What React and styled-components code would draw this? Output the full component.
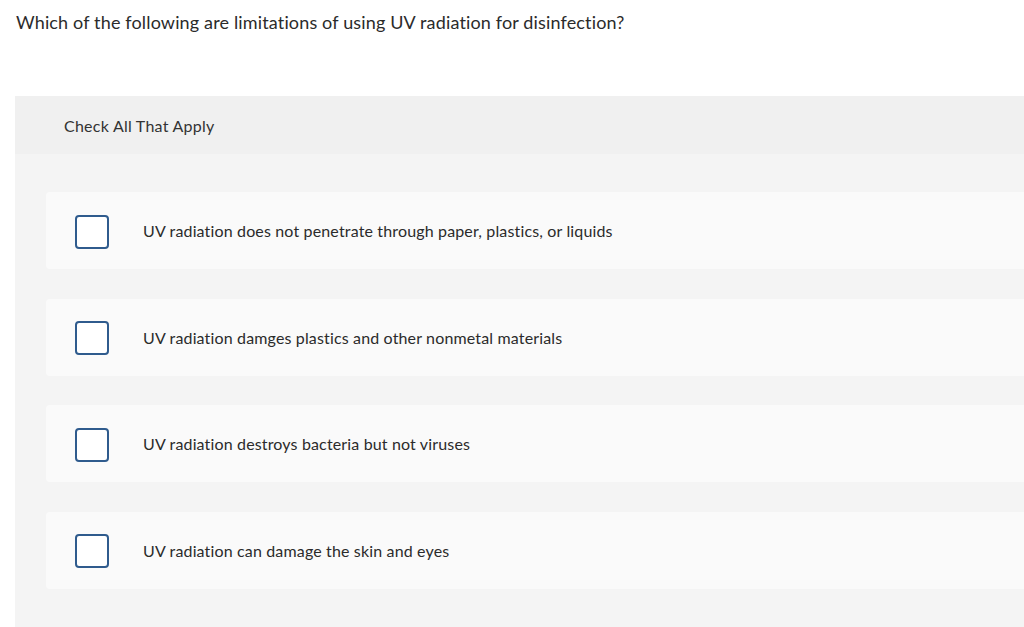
import React, { useState } from 'react';
import styled, { createGlobalStyle } from 'styled-components';

const GlobalStyle = createGlobalStyle`
	html, body {
		margin: 0;
		padding: 0;
		background: #fff;
		overflow: hidden;
	}
	body {
		font-family: Lato, "Open Sans", "Liberation Sans", sans-serif;
		color: #333;
		letter-spacing: 0.15px;
	}
`;

const options = [
	'UV radiation does not penetrate through paper, plastics, or liquids',
	'UV radiation damges plastics and other nonmetal materials',
	'UV radiation destroys bacteria but not viruses',
	'UV radiation can damage the skin and eyes'
];

const App = () => {
	const [ checked, setChecked ] = useState([]);

	const toggle = (i) => {
		setChecked(prev => prev.includes(i) ? prev.filter(x => x !== i) : [ ...prev, i ]);
	};

	return (
		<Page>
			<GlobalStyle />
			<Question>Which of the following are limitations of using UV radiation for disinfection?</Question>

			<Panel>
				<PanelHeader>Check All That Apply</PanelHeader>
				<Choices>
					{ options.map((text, i) => (
						<Choice key={ i } onClick={ () => toggle(i) }>
							<Box checked={ checked.includes(i) } />
							<ChoiceText>{ text }</ChoiceText>
						</Choice>
					)) }
				</Choices>
			</Panel>
		</Page>
	);
};

const Page = styled.div`
	width: 1024px;
	height: 627px;
	overflow: hidden;
`;

const Question = styled.p`
	margin: 0;
	padding: 11px 0 0 16px;
	font-size: 18px;
	line-height: 22px;
	color: #2b2b2b;
`;

const Panel = styled.div`
	margin: 63px -40px 0 15px;
	background: #f4f4f4;
	min-height: 600px;
`;

const PanelHeader = styled.div`
	background: #f0f0f0;
	height: 58px;
	display: flex;
	align-items: center;
	padding-left: 49px;
	font-size: 16px;
	letter-spacing: 0.25px;
	color: #333;
`;

const Choices = styled.div`
	display: flex;
	flex-direction: column;
	gap: 29.6px;
	padding: 38px 0 0 31px;
`;

const Choice = styled.label`
	display: flex;
	align-items: center;
	height: 77px;
	background: #fafafa;
	border-radius: 4px;
	padding-left: 29px;
	cursor: pointer;
`;

const Box = styled.span`
	width: 30px;
	height: 30px;
	margin-top: 2px;
	border: 2px solid #2f5b8d;
	border-radius: 4px;
	background: ${ ({ checked }) => checked ? '#2f5b8d' : '#fff' };
	flex-shrink: 0;
`;

const ChoiceText = styled.span`
	margin-left: 34px;
	font-size: 16px;
	color: #2b2b2b;
`;

export default App;
